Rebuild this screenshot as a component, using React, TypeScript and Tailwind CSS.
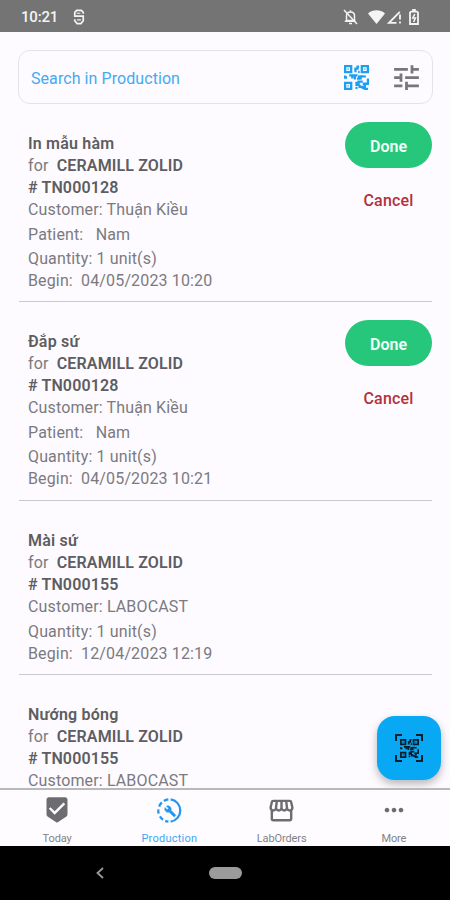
import React from 'react';
import { MdBeenhere, MdMoreHoriz, MdOutlineStorefront, MdTune } from 'react-icons/md';

interface Job {
  name: string;
  order: string;
  customer: string;
  patient?: string;
  begin?: string;
  canFinish: boolean;
}

const jobs: Job[] = [
  { name: 'In mẫu hàm', order: 'TN000128', customer: 'Thuận Kiều', patient: 'Nam', begin: '04/05/2023 10:20', canFinish: true },
  { name: 'Đắp sứ', order: 'TN000128', customer: 'Thuận Kiều', patient: 'Nam', begin: '04/05/2023 10:21', canFinish: true },
  { name: 'Mài sứ', order: 'TN000155', customer: 'LABOCAST', begin: '12/04/2023 12:19', canFinish: false },
  { name: 'Nướng bóng', order: 'TN000155', customer: 'LABOCAST', canFinish: false },
];

const QrIcon: React.FC<{ size: number; className?: string }> = ({ size, className }) => (
  <svg width={size} height={size} viewBox="0 0 24 24" fill="none" stroke="currentColor" strokeWidth="2.2" className={className}>
    <path d="M1.1 1.1h5.8v5.8H1.1zM17.1 1.1h5.8v5.8h-5.8zM1.1 17.1h5.8v5.8H1.1z" />
    <path d="M3.4 4h1.2M19.4 4h1.2M3.4 20h1.2" strokeWidth="1.2" />
    <path d="M14.5 1.5H13v2h-2V7M13.5 6.5H15M1 10v2h2M5 10h3v3M8 10h5M10.5 10v4M14.5 10v3h-2M16 14v-3h3M20 10v2M23 13v5h-2M12 16v3h2v-3h4M15 19v2h3v2M11 22h2M18 18h2v5h3" />
  </svg>
);

const ProductionIcon = () => (
  <svg width="27" height="27" viewBox="0 0 24 24" fill="none" stroke="currentColor" strokeWidth="2">
    <path d="M13 2.1a10 10 0 0 1 0 19.8" />
    <path d="M11 2.1a10 10 0 0 0-4 1.4M5.2 4.8A10 10 0 0 0 2.8 8.5M2.1 11a10 10 0 0 0 .3 3.8M3.5 17.2a10 10 0 0 0 2.8 3M8.2 21.2a10 10 0 0 0 2.8.7" />
    <path
      d="M17.4 15.9l-4.1-4.1c.4-1 .2-2.3-.7-3.1a3 3 0 0 0-3.3-.6l1.9 1.9-1.3 1.3L8 9.4a3 3 0 0 0 .6 3.3c.8.8 2 1.1 3.1.7l4.1 4.1c.2.2.4.2.6 0l1-1c.2-.2.2-.4 0-.6z"
      fill="currentColor"
      stroke="currentColor"
      strokeWidth="0.5"
    />
  </svg>
);

const StatusBar = () => (
  <header className="flex h-8 shrink-0 items-center bg-[#747474] pl-[21px] pr-[31px] pt-0.5 text-[#f4f4f4]">
    <span className="w-[37px] whitespace-nowrap text-[15px] font-medium tracking-[-0.2px]">10:21</span>
    <svg width="12" height="16" viewBox="0 0 12 17" fill="none" stroke="currentColor" strokeWidth="1.8" className="ml-[15px]">
      <path d="M10.5 5V3.5L8.5 1.5h-5l-2 2v4h9v5l-2.5 3H4l-2.5-3V11" />
      <path d="M3.5 4.5h4M4 11.5h4" strokeWidth="1.2" />
    </svg>
    <div className="ml-auto flex items-center">
      <svg width="15" height="16" viewBox="0 0 15 16" fill="none" stroke="currentColor" strokeWidth="1.5">
        <path d="M3.5 11.5h8V6.8c0-2-1.3-3.8-4-3.8S3.5 5 3.5 7zM1.8 12.2h10.8M7.5 1.2v2M6 14.4h3" />
        <path d="M1 1l13 14" />
      </svg>
      <svg width="17" height="14" viewBox="0 0 17 14" fill="currentColor" className="ml-2.5">
        <path d="M8.5 14L0 3.5C4.5-.8 12.5-.8 17 3.5z" />
      </svg>
      <svg width="15" height="14" viewBox="0 0 15 14" fill="none" stroke="currentColor" strokeWidth="1.8" className="ml-0.5">
        <path d="M9.5 12.8H2L12.8 1.8M13 4.5v5M13 11.5v2" />
      </svg>
      <svg width="10" height="16" viewBox="0 0 10 16" fill="none" stroke="currentColor" strokeWidth="1.8" className="ml-[7px]">
        <path d="M3.2 1h3.6M2 2.6h6l1 1V15H1V3.6z" />
        <path d="M5.8 5L3.8 9h2.6l-1.8 4" strokeWidth="1.6" />
      </svg>
    </div>
  </header>
);

const JobRow: React.FC<{ job: Job }> = ({ job }) => (
  <article className="ml-[19px] mr-[18px] flex shrink-0 justify-between border-b border-[#c9c8cb] pb-[9.4px] pl-[9px] pt-[29px]">
    <div className="whitespace-pre text-base leading-[22px] tracking-[0.14px] text-[#7b7a7e]">
      <h3 className="font-semibold tracking-[0.2px] text-[#5e5d61]">{job.name}</h3>
      <p>for  <b className="font-semibold text-[#5e5d61]">CERAMILL ZOLID</b></p>
      <p><b className="font-semibold text-[#5e5d61]"># {job.order}</b></p>
      <p className="mb-[3px]">Customer: {job.customer}</p>
      {job.patient && <p className="mb-0.5">Patient:   {job.patient}</p>}
      {job.begin && (
        <>
          <p>Quantity: 1 unit(s)</p>
          <p>Begin:  {job.begin}</p>
        </>
      )}
    </div>
    {job.canFinish && (
      <div className="-mt-[11px] flex w-[87px] flex-col items-center">
        <button className="h-[46px] w-full rounded-full bg-[#27c77b] pt-[3px] text-base font-semibold text-[#f1fff7]">Done</button>
        <button className="mt-[21px] text-base font-medium leading-6 tracking-[0.2px] text-[#b4303a]">Cancel</button>
      </div>
    )}
  </article>
);

const tabs = [
  { label: 'Today', icon: <MdBeenhere size={28} /> },
  { label: 'Production', icon: <ProductionIcon />, active: true },
  { label: 'LabOrders', icon: <MdOutlineStorefront size={29} /> },
  { label: 'More', icon: <MdMoreHoriz size={28} /> },
];

const App: React.FC = () => {
  return (
    <div className="flex h-[900px] w-[450px] flex-col overflow-hidden bg-[#fdfbff] font-['Roboto',sans-serif]">
      <StatusBar />
      <main className="relative flex min-h-0 flex-1 flex-col overflow-hidden">
        <div className="ml-[18px] mr-[17px] mt-[18px] flex h-[54px] shrink-0 items-center rounded-xl border border-[#e5e3e7] px-3">
          <span className="pt-[3px] text-base tracking-[0.07px] text-[#45aaf0]">Search in Production</span>
          <QrIcon size={25} className="ml-auto text-[#1b9ff0]" />
          <MdTune size={33} className="-mr-[3px] ml-[21px] text-[#77767a]" />
        </div>
        {jobs.map((job) => (
          <JobRow key={job.name} job={job} />
        ))}
        <button className="absolute bottom-2 right-[9px] flex size-16 items-center justify-center rounded-[18px] bg-[#08a8f4] text-[#08202e] shadow-[0_4px_8px_rgba(0,0,0,0.28)]">
          <svg width="28" height="28" viewBox="0 0 28 28" fill="none" stroke="currentColor" strokeWidth="2" className="absolute">
            <path d="M1 7V1h6M21 1h6v6M27 21v6h-6M7 27H1v-6" />
          </svg>
          <QrIcon size={19} />
        </button>
      </main>
      <nav className="grid h-[58px] shrink-0 grid-cols-4 border-t-2 border-[#b9b8ba] bg-[#fefcff] pl-px">
        {tabs.map((tab) => (
          <div key={tab.label} className={`flex flex-col items-center ${tab.active ? 'text-[#2196f3]' : 'text-[#6d6c70]'}`}>
            <span className="mt-[6px] flex h-7 items-center">{tab.icon}</span>
            <span className={`mt-[7px] text-[11px] leading-4 opacity-85 ${tab.active ? 'tracking-[0.25px]' : 'tracking-[-0.1px]'}`}>{tab.label}</span>
          </div>
        ))}
      </nav>
      <footer className="grid h-[54px] shrink-0 grid-cols-[200px_50px_200px] items-center justify-items-center bg-black text-[#9b9b9b]">
        <svg width="8" height="12" viewBox="0 0 8 12" fill="none" stroke="currentColor" strokeWidth="1.8">
          <path d="M7 1L1.5 6 7 11" />
        </svg>
        <span className="h-3 w-[33px] rounded-full bg-[#9b9b9b]" />
      </footer>
    </div>
  );
};

export default App;
